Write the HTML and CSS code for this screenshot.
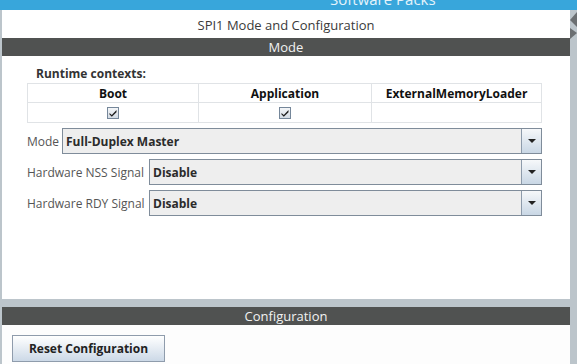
FILE: index.html
```html
<!DOCTYPE html>
<html>
<head>
<meta charset="utf-8">
<link rel="stylesheet" href="styles.css">
</head>
<body>
<div class="app">
  <div class="topbar"><span class="toptext">Software Packs</span></div>
  <div class="main">
    <div class="lstrip"></div>
    <div class="panel">
      <div class="upper">
        <div class="title">SPI1 Mode and Configuration</div>
        <div class="hdr">Mode</div>
        <div class="content">
          <div class="rt-label">Runtime contexts:</div>
          <div class="rt-table">
            <div class="cell head">Boot</div>
            <div class="cell head">Application</div>
            <div class="cell head">ExternalMemoryLoader</div>
            <div class="cell"><span class="chk"><svg width="8" height="8" viewBox="0 0 8 8"><path d="M0.5 4 L2.8 6 L7.5 1 L7.5 3.2 L2.8 7.8 L0.5 5.6 Z" fill="#1e1e1e"/></svg></span></div>
            <div class="cell"><span class="chk"><svg width="8" height="8" viewBox="0 0 8 8"><path d="M0.5 4 L2.8 6 L7.5 1 L7.5 3.2 L2.8 7.8 L0.5 5.6 Z" fill="#1e1e1e"/></svg></span></div>
            <div class="cell"></div>
          </div>
          <div class="row r-mode">
            <span class="lbl">Mode</span>
            <div class="combo"><span class="val">Full-Duplex Master</span><span class="arrow"><i></i></span></div>
          </div>
          <div class="row r-sig">
            <span class="lbl">Hardware NSS Signal</span>
            <div class="combo"><span class="val">Disable</span><span class="arrow"><i></i></span></div>
          </div>
          <div class="row r-sig">
            <span class="lbl">Hardware RDY Signal</span>
            <div class="combo"><span class="val">Disable</span><span class="arrow"><i></i></span></div>
          </div>
        </div>
      </div>
      <div class="splitter"></div>
      <div class="hdr hdr2">Configuration</div>
      <div class="lower">
        <button class="btn">Reset Configuration</button>
      </div>
    </div>
    <div class="rstrip">
      <svg width="7" height="30" viewBox="0 0 7 30"><path d="M7 0 L0 8 L7 15 Z" fill="#6b6f72"/><path d="M0 16 L7 21 L0 27 Z" fill="#6b6f72"/></svg>
    </div>
  </div>
</div>
</body>
</html>
```
FILE: styles.css
```css
html, body { margin: 0; padding: 0; }
body {
  width: 577px; height: 364px; overflow: hidden;
  font-family: "Open Sans", "Noto Sans", sans-serif;
  background: #bcc5cb;
}
.app { width: 577px; height: 364px; display: flex; flex-direction: column; }
.topbar {
  height: 10px; background: #38a6db; overflow: hidden; flex: none;
}
.toptext {
  display: block; color: #e6f4fb; font-size: 15px; line-height: 20px;
  margin-top: -11px; padding-left: 330px;
}
.main { flex: 1; display: flex; min-height: 0; }
.lstrip { width: 2px; background: #bcc5cb; flex: none; }
.rstrip { width: 7px; background: #bcc5cb; flex: none; line-height: 0; }
.rstrip svg { display: block; margin-top: 2px; }
.panel { flex: 1; display: flex; flex-direction: column; background: #fff; }
.upper { height: 289px; display: flex; flex-direction: column; background: #fff; }
.title {
  height: 26px; line-height: 26px; padding-top: 2px; text-align: center; font-size: 13px; color: #3a3a3a;
}
.hdr {
  height: 18px; line-height: 18px; background: #505251; color: #f2f2f2;
  text-align: center; font-size: 13px;
}
.content { padding: 9px 0 0 25px; }
.rt-label { font-size: 12px; font-weight: bold; color: #333; padding-left: 9px; line-height: 18px; }
.rt-table {
  width: 514px; display: grid; grid-template-columns: 171px 173px 170px;
  border-top: 1px solid #e0e3e6; border-left: 1px solid #e0e3e6;
}
.cell {
  border-right: 1px solid #e0e3e6; border-bottom: 1px solid #e0e3e6;
  height: 18px; display: flex; align-items: center; justify-content: center;
  font-size: 12px; color: #111;
}
.cell.head { font-weight: bold; }
.cell:nth-child(n+4) { height: 19px; }
.chk {
  width: 10px; height: 10px; border: 1px solid #75879a;
  background: linear-gradient(#f4f6f8, #d3dbe4); display: flex; align-items: center; justify-content: center;
}
.row { display: flex; align-items: center; margin-top: 5px; }
.lbl { font-size: 12px; color: #555; margin-right: 2px; white-space: nowrap; }
.combo {
  flex: none; margin-left: auto; margin-right: 28px; height: 24px;
  border: 1px solid #7f8c9a; background: #eeeeee; display: flex; align-items: center;
}
.r-mode .combo { width: 478px; }
.r-sig .combo { width: 391px; }
.val { flex: 1; font-size: 12px; font-weight: bold; color: #2b2b2b; padding-left: 3px; }
.arrow {
  width: 19px; height: 24px; border-left: 1px solid #8d9bab;
  background: linear-gradient(#f6f8fa, #c9d7e5); display: flex; align-items: center; justify-content: center;
}
.arrow i {
  width: 0; height: 0; border-left: 4px solid transparent; border-right: 4px solid transparent;
  border-top: 4px solid #222;
}
.splitter { height: 8px; background: #bcc5cb; margin: 0 -7px 0 -2px; }
.hdr2 { height: 18px; line-height: 18px; }
.lower { flex: 1; background: #fdfdfd; padding: 10px 0 0 10px; }
.btn {
  width: 153px; height: 27px; border: 1px solid #8f9cac; border-radius: 0;
  background: linear-gradient(#ffffff, #ccd9e7); font-family: inherit;
  font-size: 12px; font-weight: bold; color: #222; padding: 0;
}
```
